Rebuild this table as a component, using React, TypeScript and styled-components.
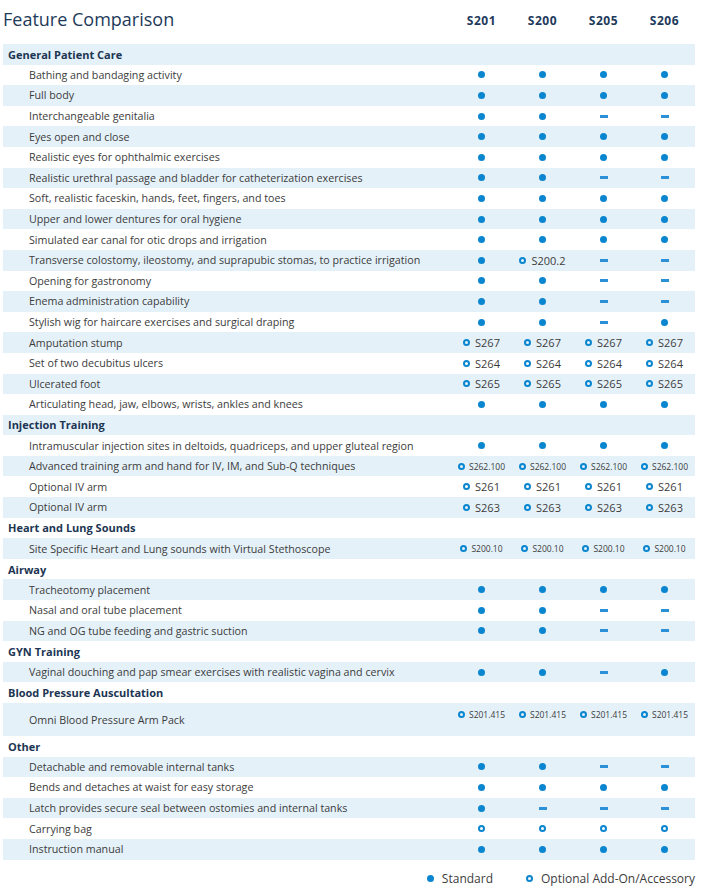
import React from "react";
import styled, { createGlobalStyle } from "styled-components";

const GlobalStyle = createGlobalStyle`
  html, body { margin: 0; padding: 0; background: #ffffff; }
  body { font-family: "Open Sans", "Liberation Sans", sans-serif; }
`;

const Page = styled.div`
  width: 692px;
  padding: 0 6px 0 3px;
`;

const COLS = "1fr repeat(4, 61px)";

const HeaderRow = styled.div`
  display: grid;
  grid-template-columns: ${COLS};
  height: 44px;
  align-items: start;
`;

const Title = styled.h1`
  margin: 0;
  padding-top: 7px;
  font-size: 18px;
  font-weight: 400;
  color: #1e3a5a;
`;

const ModelHead = styled.div`
  padding-top: 12px;
  text-align: center;
  font-size: 12px;
  font-weight: 700;
  letter-spacing: 0.6px;
  color: #1d3a5c;
`;

const Row = styled.div<{ $shade: boolean; $tall?: boolean }>`
  display: grid;
  grid-template-columns: ${COLS};
  height: ${(p) => (p.$tall ? "33px" : "20.6px")};
  align-items: center;
  background: ${(p) => (p.$shade ? "#e5f1f9" : "transparent")};
`;

const SectionLabel = styled.div`
  padding-left: 5px;
  font-size: 11px;
  font-weight: 700;
  color: #1c3553;
`;

const FeatureLabel = styled.div`
  padding-left: 26px;
  font-size: 10.7px;
  color: #3c3c3c;
  white-space: nowrap;
`;

const Cell = styled.div<{ $top?: boolean; $small?: boolean }>`
  display: flex;
  align-items: center;
  justify-content: center;
  gap: ${(p) => (p.$small ? "4px" : "5px")};
  align-self: ${(p) => (p.$top ? "start" : "center")};
  padding-top: ${(p) => (p.$top ? "1.5px" : "0")};
  height: 20.6px;
  box-sizing: content-box;
`;

const Dot = styled.span`
  width: 7px;
  height: 7px;
  border-radius: 50%;
  background: #0a86d0;
  flex: none;
`;

const Ring = styled.span`
  width: 7px;
  height: 7px;
  box-sizing: border-box;
  border-radius: 50%;
  border: 2px solid #0a86d0;
  flex: none;
`;

const Dash = styled.span`
  width: 8px;
  height: 3px;
  background: #2b90d6;
  flex: none;
`;

const Code = styled.span<{ $small?: boolean }>`
  font-size: ${(p) => (p.$small ? "8.5px" : "11px")};
  color: #3c3c3c;
  white-space: nowrap;
`;

const Legend = styled.div`
  display: flex;
  justify-content: flex-end;
  align-items: center;
  gap: 33px;
  height: 36px;
  padding-top: 1px;
`;

const LegendItem = styled.div`
  display: flex;
  align-items: center;
  gap: 8px;
  font-size: 12px;
  color: #3c3c3c;
`;

type Val = string;
type Item =
  | { kind: "section"; label: string }
  | { kind: "feature"; label: string; vals: Val[]; tall?: boolean };

const sec = (label: string): Item => ({ kind: "section", label });
const f = (label: string, vals: string, tall?: boolean): Item => ({
  kind: "feature",
  label,
  vals: vals.split(" "),
  tall,
});

const rows: Item[] = [
  sec("General Patient Care"),
  f("Bathing and bandaging activity", "S S S S"),
  f("Full body", "S S S S"),
  f("Interchangeable genitalia", "S S D D"),
  f("Eyes open and close", "S S S S"),
  f("Realistic eyes for ophthalmic exercises", "S S S S"),
  f("Realistic urethral passage and bladder for catheterization exercises", "S S D D"),
  f("Soft, realistic faceskin, hands, feet, fingers, and toes", "S S S S"),
  f("Upper and lower dentures for oral hygiene", "S S S S"),
  f("Simulated ear canal for otic drops and irrigation", "S S S S"),
  f("Transverse colostomy, ileostomy, and suprapubic stomas, to practice irrigation", "S S200.2 D D"),
  f("Opening for gastronomy", "S S D D"),
  f("Enema administration capability", "S S D D"),
  f("Stylish wig for haircare exercises and surgical draping", "S S D S"),
  f("Amputation stump", "S267 S267 S267 S267"),
  f("Set of two decubitus ulcers", "S264 S264 S264 S264"),
  f("Ulcerated foot", "S265 S265 S265 S265"),
  f("Articulating head, jaw, elbows, wrists, ankles and knees", "S S S S"),
  sec("Injection Training"),
  f("Intramuscular injection sites in deltoids, quadriceps, and upper gluteal region", "S S S S"),
  f("Advanced training arm and hand for IV, IM, and Sub-Q techniques", "s:S262.100 s:S262.100 s:S262.100 s:S262.100"),
  f("Optional IV arm", "S261 S261 S261 S261"),
  f("Optional IV arm", "S263 S263 S263 S263"),
  sec("Heart and Lung Sounds"),
  f("Site Specific Heart and Lung sounds with Virtual Stethoscope", "s:S200.10 s:S200.10 s:S200.10 s:S200.10"),
  sec("Airway"),
  f("Tracheotomy placement", "S S S S"),
  f("Nasal and oral tube placement", "S S D D"),
  f("NG and OG tube feeding and gastric suction", "S S D D"),
  sec("GYN Training"),
  f("Vaginal douching and pap smear exercises with realistic vagina and cervix", "S S D S"),
  sec("Blood Pressure Auscultation"),
  f("Omni Blood Pressure Arm Pack", "s:S201.415 s:S201.415 s:S201.415 s:S201.415", true),
  sec("Other"),
  f("Detachable and removable internal tanks", "S S D D"),
  f("Bends and detaches at waist for easy storage", "S S S S"),
  f("Latch provides secure seal between ostomies and internal tanks", "S D D D"),
  f("Carrying bag", "O O O O"),
  f("Instruction manual", "S S S S"),
];

const ValueCell: React.FC<{ v: Val; top?: boolean }> = ({ v, top }) => {
  let content: React.ReactNode;
  let small = false;
  if (v === "S") content = <Dot />;
  else if (v === "D") content = <Dash />;
  else if (v === "O") content = <Ring />;
  else {
    small = v.startsWith("s:");
    const code = small ? v.slice(2) : v;
    content = (
      <>
        <Ring />
        <Code $small={small}>{code}</Code>
      </>
    );
  }
  return (
    <Cell $top={top} $small={small}>
      {content}
    </Cell>
  );
};

export default function App() {
  return (
    <Page>
      <GlobalStyle />
      <HeaderRow>
        <Title>Feature Comparison</Title>
        {["S201", "S200", "S205", "S206"].map((m) => (
          <ModelHead key={m}>{m}</ModelHead>
        ))}
      </HeaderRow>
      {rows.map((r, i) =>
        r.kind === "section" ? (
          <Row key={i} $shade={i % 2 === 0}>
            <SectionLabel>{r.label}</SectionLabel>
          </Row>
        ) : (
          <Row key={i} $shade={i % 2 === 0} $tall={r.tall}>
            <FeatureLabel>{r.label}</FeatureLabel>
            {r.vals.map((v, j) => (
              <ValueCell key={j} v={v} top={r.tall} />
            ))}
          </Row>
        )
      )}
      <Legend>
        <LegendItem>
          <Dot />
          Standard
        </LegendItem>
        <LegendItem>
          <Ring />
          Optional Add-On/Accessory
        </LegendItem>
      </Legend>
    </Page>
  );
}
